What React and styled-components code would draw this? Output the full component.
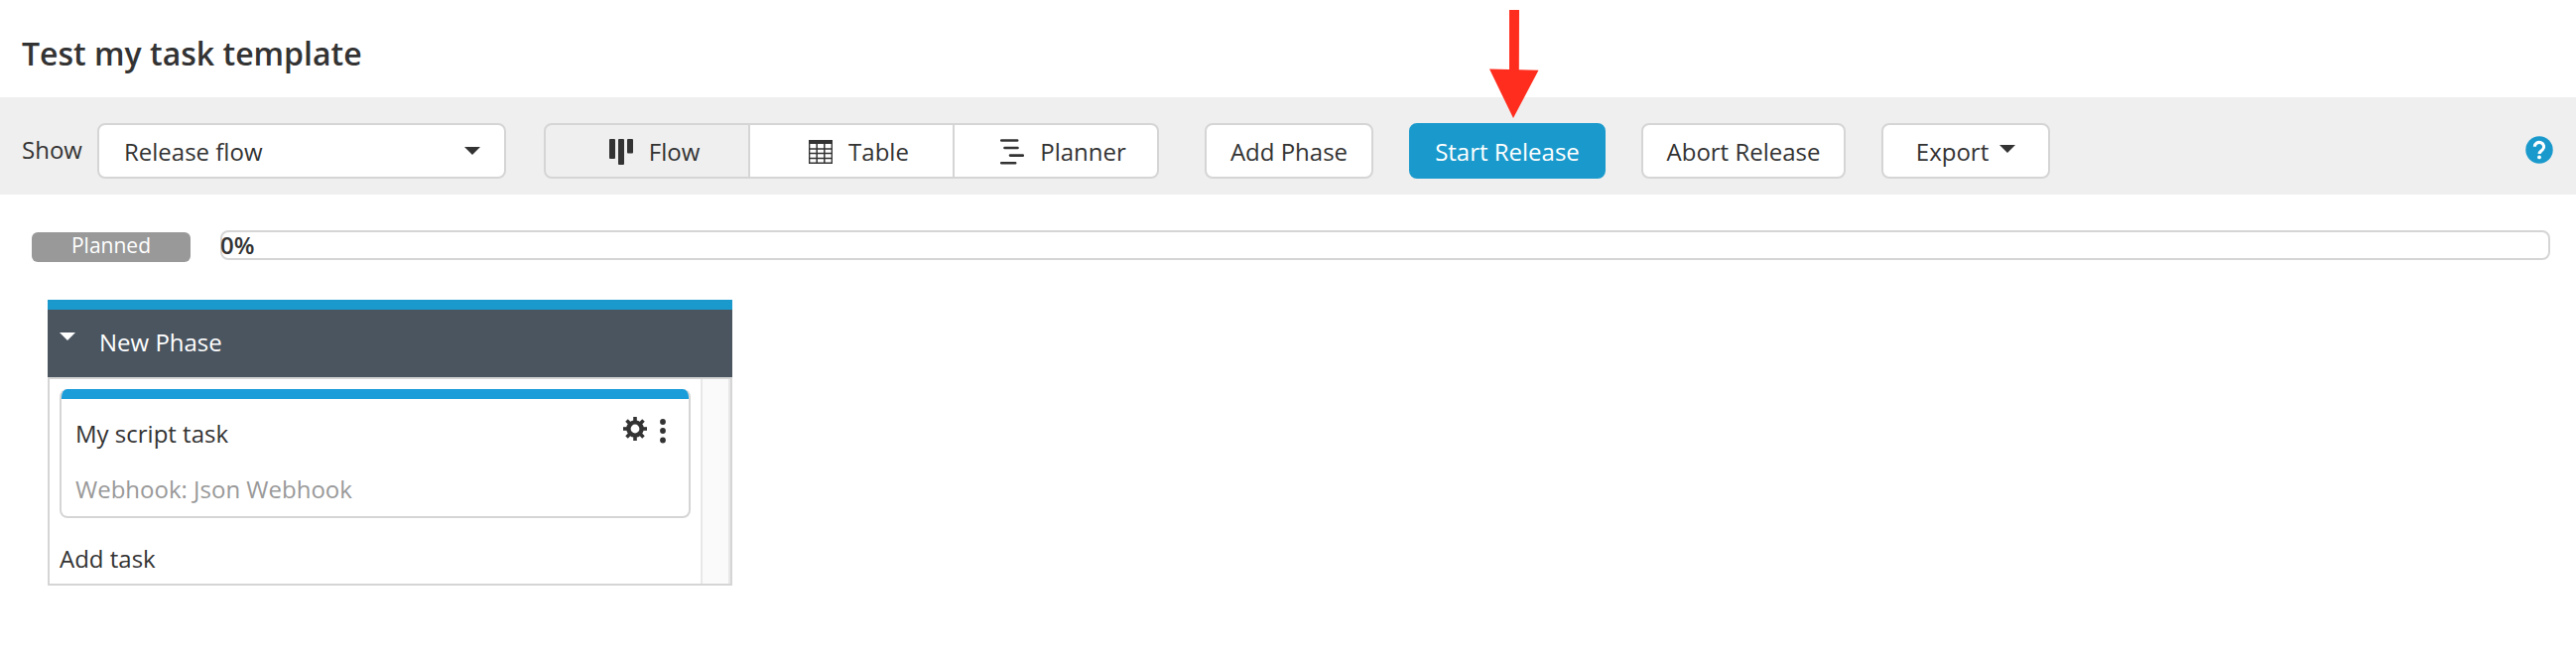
import React from "react";
import styled, { createGlobalStyle, css } from "styled-components";

const color = {
  text: "#333333",
  muted: "#999999",
  line: "#d5d5d5",
  lineSoft: "#e8e8e8",
  bar: "#efefef",
  blue: "#1a9acc",
  taskBlue: "#1a9dd9",
  slate: "#4a5560",
  arrow: "#ff2d1e",
};

const GlobalStyle = createGlobalStyle`
  *, *::before, *::after { box-sizing: border-box; }
  body {
    margin: 0;
    background: #fff;
    color: ${color.text};
    font-family: "Open Sans", "Noto Sans", sans-serif;
    font-size: 24px;
    line-height: 32px;
  }
  button, select { font: inherit; color: inherit; }
  svg { display: block; flex: none; }
`;

const Header = styled.header`
  padding: 32px 22px 22px;
`;

const Title = styled.h1`
  margin: 0;
  font-size: 32px;
  line-height: 44px;
  font-weight: 600;
`;

const Toolbar = styled.div`
  display: flex;
  align-items: center;
  padding: 26px 23px 16px 22px;
  background: ${color.bar};
`;

const ShowLabel = styled.label`
  width: 76px;
  padding-bottom: 2px;
`;

const SelectBox = styled.div`
  position: relative;
  width: 412px;
  margin-right: 38px;
`;

const Select = styled.select`
  appearance: none;
  width: 100%;
  height: 56px;
  padding: 2px 48px 0 25px;
  border: 2px solid ${color.line};
  border-radius: 8px;
  background: #fff;
`;

const SelectCaret = styled.span`
  position: absolute;
  top: 24px;
  right: 26px;
  pointer-events: none;
`;

const controlBox = css`
  display: flex;
  align-items: center;
  justify-content: center;
  height: 56px;
  padding: 2px 0 0;
  border: 2px solid ${color.line};
  background: #fff;
  cursor: pointer;
`;

const ViewSwitch = styled.div`
  display: flex;
  width: 620px;
  margin-right: 46px;
`;

const ViewButton = styled.button`
  ${controlBox}
  flex: 1 1 0;
  gap: 16px;
  padding-left: 15px;
  background: ${(p) => (p.$active ? color.bar : "#fff")};

  & + & { border-left-width: 0; }
  &:first-child { border-radius: 8px 0 0 8px; }
  &:last-child { border-radius: 0 8px 8px 0; }
`;

const Actions = styled.div`
  display: flex;
  gap: 36px;
`;

const ActionButton = styled.button`
  ${controlBox}
  position: relative;
  width: ${(p) => p.$width}px;
  gap: 11px;
  border-radius: 8px;
  ${(p) =>
    p.$primary &&
    css`
      border-color: ${color.blue};
      background: ${color.blue};
      color: #fff;
      font-weight: 500;
    `}
`;

const ExportCaret = styled.span`
  padding-bottom: 6px;
`;

const Pointer = styled.svg`
  position: absolute;
  left: 77px;
  bottom: 59px;
  pointer-events: none;
`;

const HelpLink = styled.a`
  margin-left: auto;
  padding-bottom: 2px;
`;

const StatusRow = styled.div`
  display: flex;
  align-items: flex-start;
  gap: 30px;
  padding: 36px 26px 38px 32px;
`;

const StatusBadge = styled.span`
  width: 160px;
  height: 30px;
  margin-top: 2px;
  border-radius: 6px;
  background: ${color.muted};
  color: #fff;
  font-size: 21px;
  line-height: 26px;
  font-weight: 500;
  text-align: center;
`;

const Progress = styled.div`
  flex: 1;
  height: 30px;
  border: 2px solid ${color.line};
  border-radius: 8px;
  line-height: 26px;
  font-weight: 600;
`;

const ProgressLabel = styled.span`
  margin-left: -2px;
`;

const Phase = styled.section`
  width: 690px;
  margin-left: 48px;
`;

const PhaseHeader = styled.header`
  display: flex;
  align-items: center;
  gap: 24px;
  height: 78px;
  padding: 0 12px 2px;
  border-top: 10px solid ${color.blue};
  background: ${color.slate};
  color: #fff;
`;

const CollapseButton = styled.button`
  padding: 0 0 12px;
  border: 0;
  background: none;
  cursor: pointer;
`;

const PhaseName = styled.h2`
  margin: 0;
  font-size: 24px;
  line-height: 32px;
  font-weight: 500;
`;

const PhaseBody = styled.div`
  display: flex;
  border: 2px solid ${color.line};
`;

const TaskColumn = styled.div`
  flex: 1;
  padding: 10px 10px 9px;
`;

const ScrollTrack = styled.div`
  width: 30px;
  border: solid ${color.lineSoft};
  border-width: 0 2px;
  background: #fafafa;
`;

const Task = styled.article`
  position: relative;
  height: 130px;
  overflow: hidden;
  padding: 28px 22px 0 14px;
  border: 2px solid ${color.line};
  border-top: 0;
  border-radius: 8px;

  &::before {
    content: "";
    position: absolute;
    inset: 0 0 auto;
    height: 10px;
    background: ${color.taskBlue};
  }
`;

const TaskTop = styled.div`
  display: flex;
  align-items: flex-start;
  gap: 12px;
`;

const TaskName = styled.h3`
  flex: 1;
  margin: 0;
  font-size: 24px;
  line-height: 34px;
  font-weight: 400;
`;

const IconButton = styled.button`
  padding: 0;
  border: 0;
  background: none;
  cursor: pointer;
`;

const TaskType = styled.p`
  margin: 23px 0 0;
  color: ${color.muted};
`;

const AddTask = styled.button`
  display: block;
  margin-top: 25px;
  padding: 0;
  border: 0;
  background: none;
  cursor: pointer;
`;

function Caret({ fill = color.text }) {
  return (
    <svg width="16" height="8" viewBox="0 0 16 8" aria-hidden="true">
      <path d="M0 0h16L8 8z" fill={fill} />
    </svg>
  );
}

function FlowIcon() {
  return (
    <svg width="24" height="26" viewBox="0 0 24 26" fill={color.text} aria-hidden="true">
      <rect x="0" y="0" width="6" height="20" rx="1" />
      <rect x="9" y="0" width="6" height="26" rx="1" />
      <rect x="18" y="0" width="6" height="14.500" rx="1" />
    </svg>
  );
}

function TableIcon() {
  return (
    <svg width="24" height="24" viewBox="0 0 24 24" aria-hidden="true">
      <path d="M0 0h24v4H0z" fill={color.text} />
      <path
        d="M.6 3v20.300h22.800V3M.6 9h22.800M.6 13.600h22.800M.6 18.400h22.800M8.200 4v19M15.800 4v19"
        fill="none"
        stroke={color.text}
        strokeWidth="1.500"
      />
    </svg>
  );
}

function PlannerIcon() {
  return (
    <svg width="24" height="26" viewBox="0 0 24 26" aria-hidden="true">
      <path
        d="M1.200 1.500h16M4.500 9h13M10 16.600h12.800M1.200 24.200h14"
        stroke={color.text}
        strokeWidth="2.600"
        strokeLinecap="round"
      />
    </svg>
  );
}

function HelpIcon() {
  return (
    <svg width="28" height="28" viewBox="2 2 20 20" aria-hidden="true">
      <circle cx="12" cy="12" r="9.800" fill={color.blue} />
      <circle cx="12" cy="17.300" r="1.350" fill="#fff" />
      <path
        d="M8.700 9.700a3.300 3.100 0 1 1 5.700 2.100c-1 1-2.350 1.500-2.350 3.100"
        fill="none"
        stroke="#fff"
        strokeWidth="2.200"
      />
    </svg>
  );
}

function GearIcon() {
  return (
    <svg width="24" height="24" viewBox="-12 -12 24 24" aria-hidden="true">
      <circle r="6.600" fill="none" stroke={color.text} strokeWidth="4.400" />
      {[0, 45, 90, 135, 180, 225, 270, 315].map((a) => (
        <rect
          key={a}
          x="-1.800"
          y="-12"
          width="3.600"
          height="4.500"
          fill={color.text}
          transform={`rotate(${a})`}
        />
      ))}
    </svg>
  );
}

function DotsIcon() {
  return (
    <svg width="8" height="28" viewBox="0 0 8 28" fill={color.text} aria-hidden="true">
      <circle cx="4" cy="5" r="2.900" />
      <circle cx="4" cy="14" r="2.900" />
      <circle cx="4" cy="23.500" r="2.900" />
    </svg>
  );
}

function PointerArrow() {
  return (
    <Pointer width="54" height="112" viewBox="0 0 54 112" aria-hidden="true">
      <path d="M22 3h10l-.2 60.300 19.700.5L26 112 2 62.500l20 .5z" fill={color.arrow} />
    </Pointer>
  );
}

export default function App() {
  return (
    <>
      <GlobalStyle />
      <Header>
        <Title>Test my task template</Title>
      </Header>
      <Toolbar>
        <ShowLabel htmlFor="show">Show</ShowLabel>
        <SelectBox>
          <Select id="show" defaultValue="flow">
            <option value="flow">Release flow</option>
          </Select>
          <SelectCaret>
            <Caret />
          </SelectCaret>
        </SelectBox>
        <ViewSwitch role="group" aria-label="View">
          <ViewButton type="button" $active aria-pressed="true">
            <FlowIcon />
            Flow
          </ViewButton>
          <ViewButton type="button" aria-pressed="false">
            <TableIcon />
            Table
          </ViewButton>
          <ViewButton type="button" aria-pressed="false">
            <PlannerIcon />
            Planner
          </ViewButton>
        </ViewSwitch>
        <Actions>
          <ActionButton type="button" $width={170}>Add Phase</ActionButton>
          <ActionButton type="button" $width={198} $primary>
            Start Release
            <PointerArrow />
          </ActionButton>
          <ActionButton type="button" $width={206}>Abort Release</ActionButton>
          <ActionButton type="button" $width={170}>
            Export
            <ExportCaret>
              <Caret />
            </ExportCaret>
          </ActionButton>
        </Actions>
        <HelpLink href="#help" aria-label="Help">
          <HelpIcon />
        </HelpLink>
      </Toolbar>
      <main>
        <StatusRow>
          <StatusBadge>Planned</StatusBadge>
          <Progress
            role="progressbar"
            aria-label="Release progress"
            aria-valuenow={0}
            aria-valuemin={0}
            aria-valuemax={100}
          >
            <ProgressLabel>0%</ProgressLabel>
          </Progress>
        </StatusRow>
        <Phase>
          <PhaseHeader>
            <CollapseButton type="button" aria-label="Collapse phase">
              <Caret fill="#fff" />
            </CollapseButton>
            <PhaseName>New Phase</PhaseName>
          </PhaseHeader>
          <PhaseBody>
            <TaskColumn>
              <Task>
                <TaskTop>
                  <TaskName>My script task</TaskName>
                  <IconButton type="button" aria-label="Task settings">
                    <GearIcon />
                  </IconButton>
                  <IconButton type="button" aria-label="Task menu">
                    <DotsIcon />
                  </IconButton>
                </TaskTop>
                <TaskType>Webhook: Json Webhook</TaskType>
              </Task>
              <AddTask type="button">Add task</AddTask>
            </TaskColumn>
            <ScrollTrack />
          </PhaseBody>
        </Phase>
      </main>
    </>
  );
}
